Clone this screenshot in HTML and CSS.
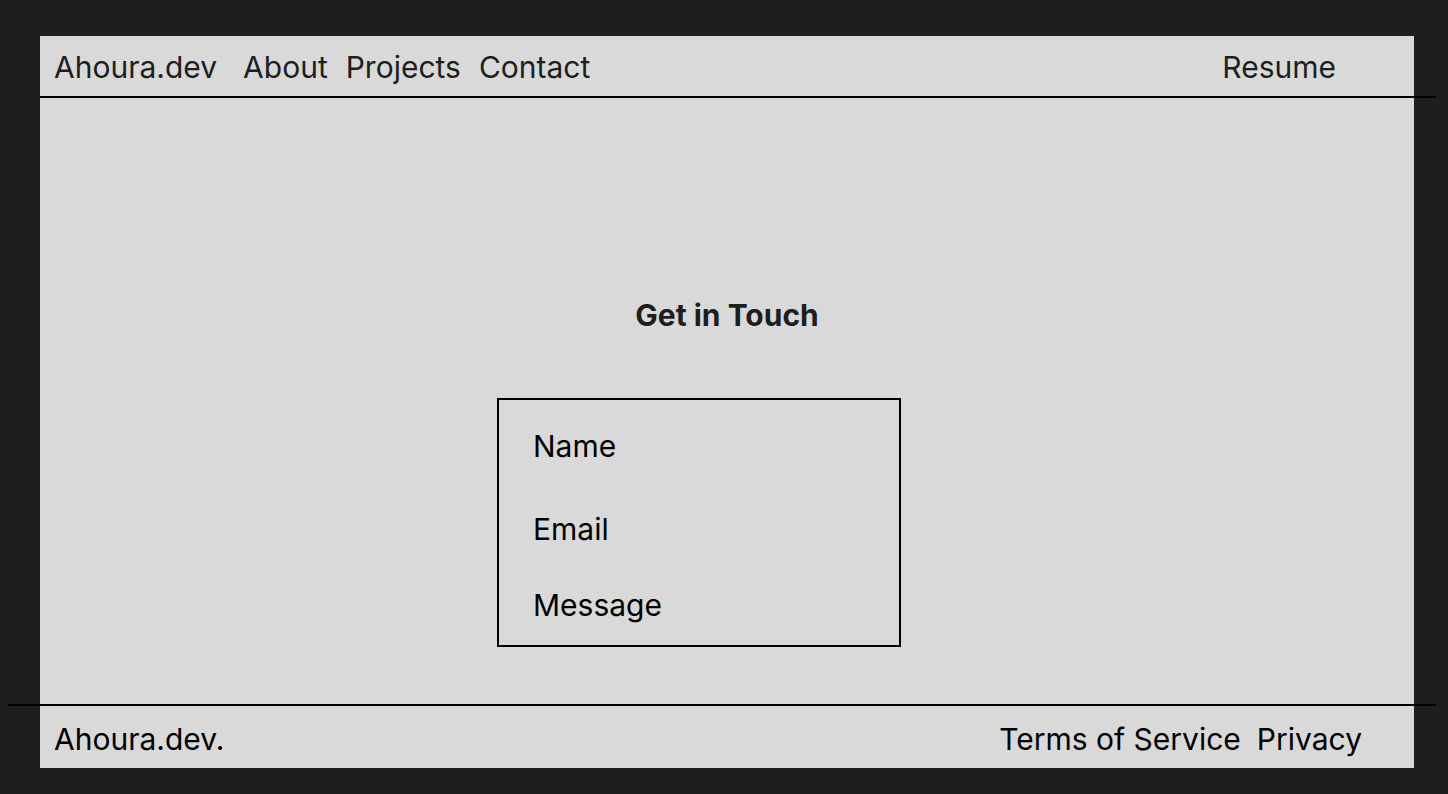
FILE: index.html
```html
<!DOCTYPE html>
<html lang="en">
<head>
<meta charset="utf-8">
<title>Ahoura.dev — Contact</title>
<link rel="stylesheet" href="styles.css">
</head>
<body>
  <div class="frame">
    <header class="header">
      <div class="brand">Ahoura.dev</div>
      <nav class="nav">
        <a class="nav-link" href="#">About</a>
        <a class="nav-link" href="#">Projects</a>
        <a class="nav-link" href="#">Contact</a>
      </nav>
      <a class="resume" href="#">Resume</a>
    </header>
    <main class="main">
      <h1 class="title">Get in Touch</h1>
      <form class="form">
        <div class="field field-name">Name</div>
        <div class="field field-email">Email</div>
        <div class="field field-message">Message</div>
      </form>
    </main>
    <footer class="footer">
      <div class="footer-brand">Ahoura.dev.</div>
      <div class="footer-links">
        <a class="footer-link" href="#">Terms of Service</a>
        <a class="footer-link" href="#">Privacy</a>
      </div>
    </footer>
  </div>
</body>
</html>
```

FILE: styles.css
```css
* { box-sizing: border-box; }

html, body {
  margin: 0;
  padding: 0;
}

body {
  background: #1e1e1e;
  font-family: Inter, "Noto Sans", "Liberation Sans", sans-serif;
  font-size: 30px;
  line-height: 36px;
  color: #000;
  overflow: hidden;
}

a { color: inherit; text-decoration: none; }

.frame {
  margin: 36px 0 0 40px;
  width: 1374px;
  height: 732px;
  background: #d9d9d9;
  display: flex;
  flex-direction: column;
}

.header {
  width: 1396px;
  height: 62px;
  flex: none;
  border-bottom: 2px solid #000;
  display: flex;
  align-items: flex-start;
  padding: 13px 0 0 14px;
  color: #1e1e1e;
}

.brand { margin-right: 26px; }

.nav {
  display: flex;
  gap: 18px;
}

.resume {
  margin-left: auto;
  margin-right: 100px;
}

.main {
  flex: 1;
  display: flex;
  flex-direction: column;
  padding-top: 199px;
}

.title {
  margin: 0;
  font-size: 30px;
  line-height: 36px;
  font-weight: 700;
  color: #1e1e1e;
  text-align: center;
}

.form {
  margin: 65px 0 0 457px;
  width: 404px;
  height: 249px;
  border: 2px solid #000;
  padding: 28px 0 0 34px;
}

.field { color: #000; }
.field-email { margin-top: 47px; }
.field-message { margin-top: 40px; }

.footer {
  margin-left: -32px;
  width: 1428px;
  height: 64px;
  flex: none;
  border-top: 2px solid #000;
  display: flex;
  align-items: flex-start;
  padding: 15px 0 0 46px;
  color: #000;
}

.footer-links {
  margin-left: auto;
  margin-right: 74px;
  display: flex;
  gap: 16px;
}
```
